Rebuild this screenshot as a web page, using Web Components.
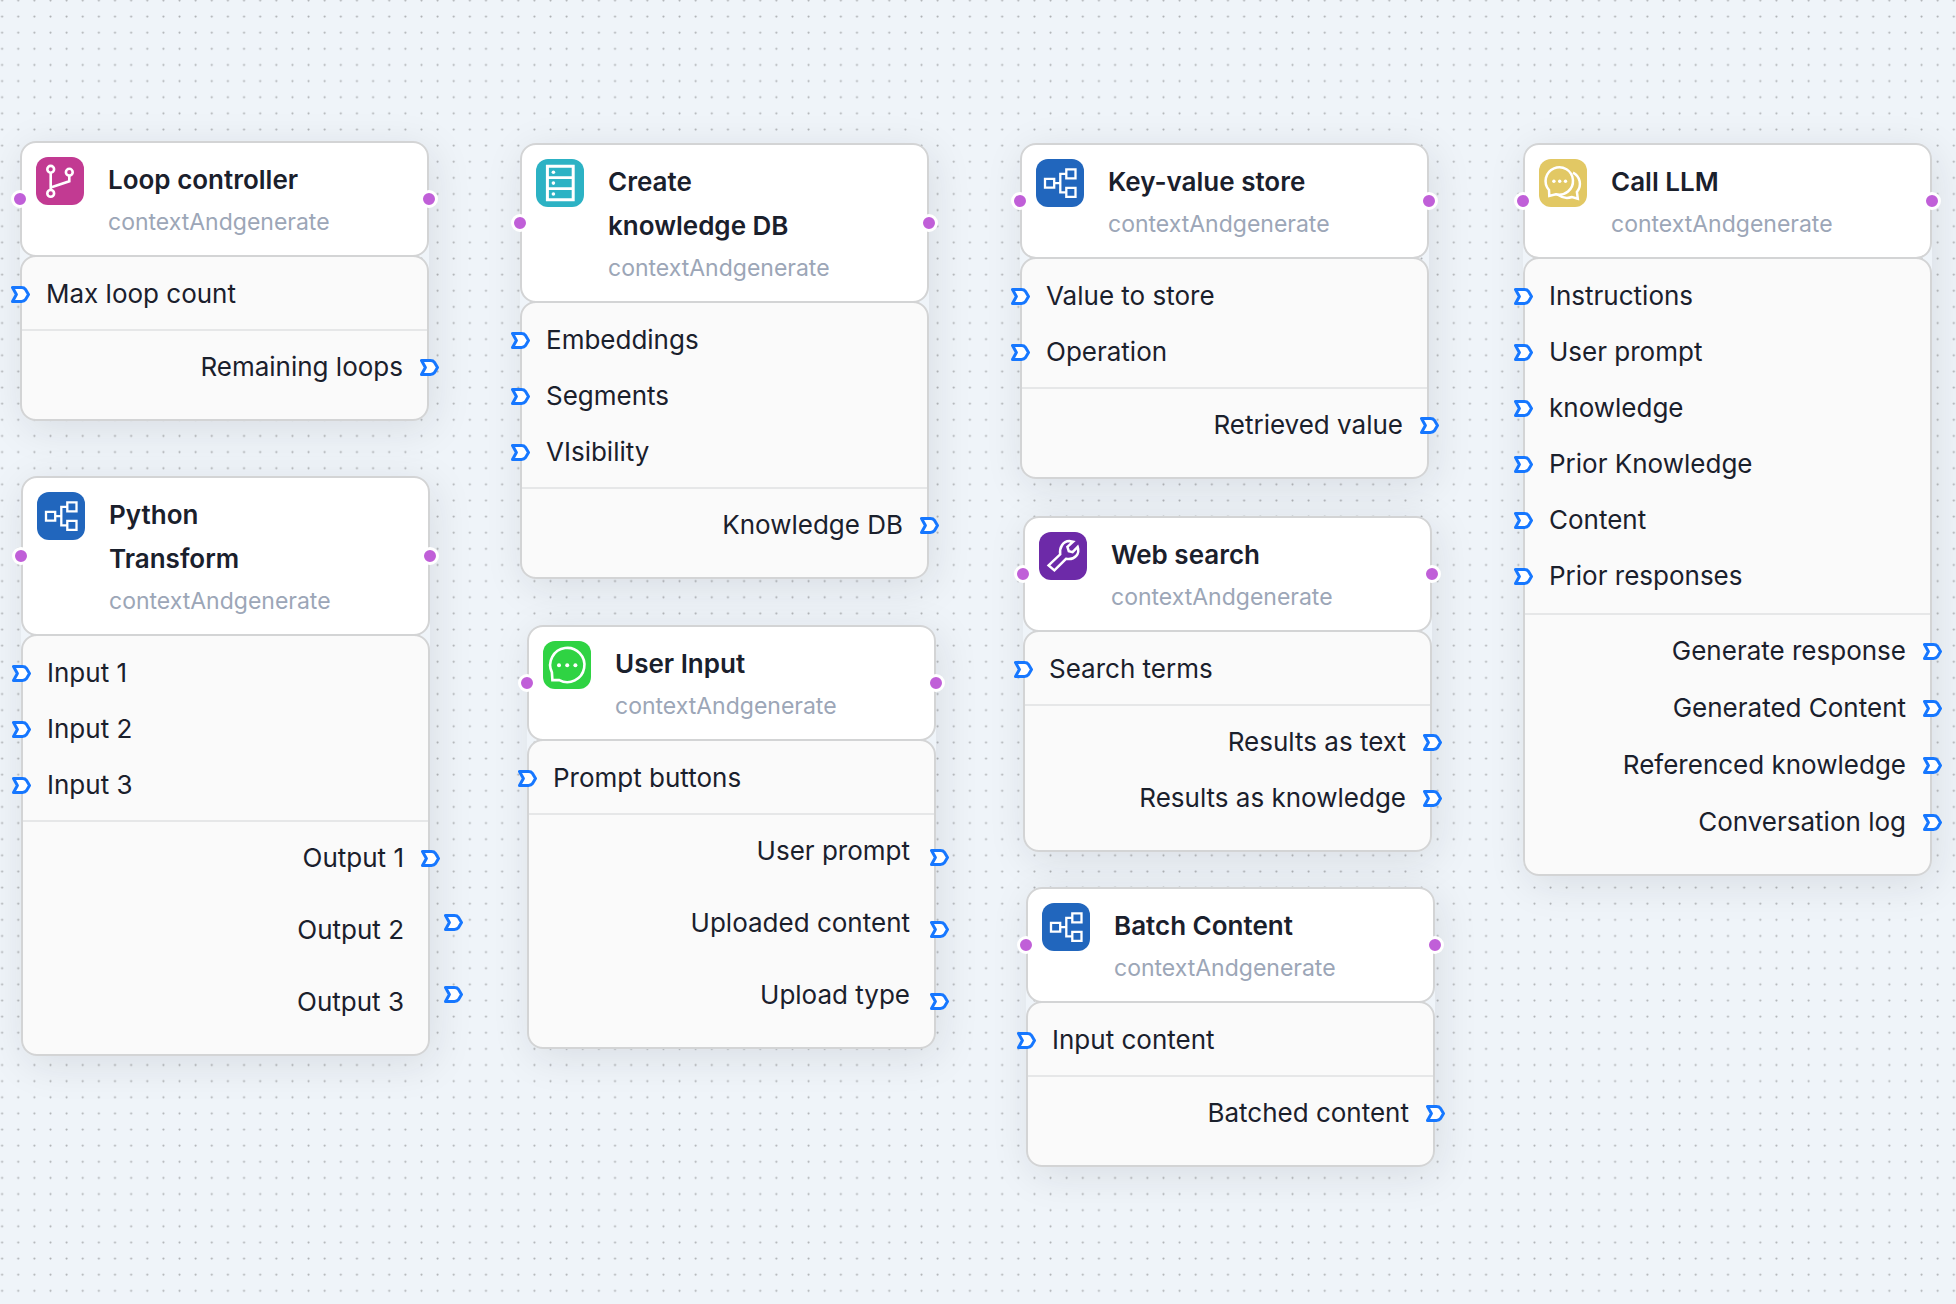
<!DOCTYPE html>
<html lang="en">
<head>
<meta charset="utf-8">
<meta name="viewport" content="width=device-width, initial-scale=1">
<title>Flow canvas</title>
<style>
  html, body { margin: 0; height: 100%; }
  body { font-family: Inter, "Liberation Sans", sans-serif; color: #1a202c; background: #eff4f9; }
</style>
</head>
<body>

<flow-canvas>
  <flow-node x="20" y="141" icon="branch" heading="Loop controller" subheading="contextAndgenerate">
    <flow-port slot="in">Max loop count</flow-port>
    <flow-port slot="out">Remaining loops</flow-port>
  </flow-node>
  <flow-node x="21" y="476" icon="split" heading="Python Transform" subheading="contextAndgenerate" spacing="loose">
    <flow-port slot="in">Input 1</flow-port>
    <flow-port slot="in">Input 2</flow-port>
    <flow-port slot="in">Input 3</flow-port>
    <flow-port slot="out">Output 1</flow-port>
    <flow-port slot="out" marker="detached">Output 2</flow-port>
    <flow-port slot="out" marker="detached">Output 3</flow-port>
  </flow-node>
  <flow-node x="520" y="143" icon="database" heading="Create knowledge DB" subheading="contextAndgenerate">
    <flow-port slot="in">Embeddings</flow-port>
    <flow-port slot="in">Segments</flow-port>
    <flow-port slot="in">VIsibility</flow-port>
    <flow-port slot="out">Knowledge DB</flow-port>
  </flow-node>
  <flow-node x="527" y="625" icon="chat" heading="User Input" subheading="contextAndgenerate" spacing="loose">
    <flow-port slot="in">Prompt buttons</flow-port>
    <flow-port slot="out" marker="low">User prompt</flow-port>
    <flow-port slot="out" marker="low">Uploaded content</flow-port>
    <flow-port slot="out" marker="low">Upload type</flow-port>
  </flow-node>
  <flow-node x="1020" y="143" icon="split" heading="Key-value store" subheading="contextAndgenerate">
    <flow-port slot="in">Value to store</flow-port>
    <flow-port slot="in">Operation</flow-port>
    <flow-port slot="out">Retrieved value</flow-port>
  </flow-node>
  <flow-node x="1023" y="516" icon="wrench" heading="Web search" subheading="contextAndgenerate">
    <flow-port slot="in">Search terms</flow-port>
    <flow-port slot="out">Results as text</flow-port>
    <flow-port slot="out">Results as knowledge</flow-port>
  </flow-node>
  <flow-node x="1026" y="887" icon="split" heading="Batch Content" subheading="contextAndgenerate">
    <flow-port slot="in">Input content</flow-port>
    <flow-port slot="out">Batched content</flow-port>
  </flow-node>
  <flow-node x="1523" y="143" icon="chats" heading="Call LLM" subheading="contextAndgenerate" spacing="roomy">
    <flow-port slot="in">Instructions</flow-port>
    <flow-port slot="in">User prompt</flow-port>
    <flow-port slot="in">knowledge</flow-port>
    <flow-port slot="in">Prior Knowledge</flow-port>
    <flow-port slot="in">Content</flow-port>
    <flow-port slot="in">Prior responses</flow-port>
    <flow-port slot="out">Generate response</flow-port>
    <flow-port slot="out">Generated Content</flow-port>
    <flow-port slot="out">Referenced knowledge</flow-port>
    <flow-port slot="out">Conversation log</flow-port>
  </flow-node>
</flow-canvas>

<script>
  class FlowCanvas extends HTMLElement {
    constructor() {
      super();
      this.attachShadow({ mode: 'open' }).innerHTML = `
        <style>
          :host { display: block; position: relative; min-height: 100vh; overflow: hidden; background: #eff4f9; }
          svg { position: absolute; inset: 0; width: 100%; height: 100%; }
        </style>
        <svg aria-hidden="true">
          <defs>
            <pattern id="grid" x="-6" y="-7.7" width="16.13" height="16.13" patternUnits="userSpaceOnUse">
              <circle cx="8.1" cy="8.1" r="1.05" fill="#adb0b3"/>
            </pattern>
          </defs>
          <rect width="100%" height="100%" fill="url(#grid)"/>
        </svg>
        <slot></slot>`;
    }
  }

  const ICONS = {
    branch: ['#c23a92', `
      <circle cx="14.7" cy="12.3" r="3.4"/><circle cx="33.3" cy="15.2" r="3.4"/><circle cx="14.7" cy="36.4" r="3.4"/>
      <path d="M14.7 15.7V33M33.3 18.6V24.2L14.7 30.4"/>`],
    split: ['#2166bd', `
      <g stroke-width="2.3"><path d="M9 19.8h9.2v8.8H9zM30.3 10.3h9.2v9h-9.2zM30.3 28.8h9.2v9h-9.2z"/>
      <path d="M18.2 24.2h6M30.3 14.8h-6v18.6h6"/></g>`],
    database: ['#2cb2c4', `
      <path stroke-width="3" d="M11.4 7.2h25.8v33.6H11.4z"/>
      <path stroke-width="2.6" d="M11.4 18.6h25.8M11.4 29.6h25.8"/>
      <g fill="#fff" stroke="none"><circle cx="17.4" cy="13.2" r="1.8"/><circle cx="17.4" cy="24.1" r="1.8"/><circle cx="17.4" cy="35" r="1.8"/></g>`],
    chat: ['#2fd343', `
      <path stroke-width="2.6" d="M8.9 31.4A17.1 17.1 0 1 1 16.3 39.1H9.4z"/>
      <g fill="#fff" stroke="none"><circle cx="16" cy="24.2" r="2"/><circle cx="24.2" cy="24.2" r="2"/><circle cx="32.4" cy="24.2" r="2"/></g>`],
    wrench: ['#6d2aa8', `
      <path stroke-width="2.5" d="M9.6 33.4L21.2 22.4C20.2 15.4 23.9 9.3 30.4 9.1L34 9.8 28.4 14.8 29.8 19.2 33.6 20.2 38.7 14.8C40.9 21.4 36.4 28.4 27 26.8L15.4 38.4z"/>`],
    chats: ['#e2c864', `
      <path stroke-width="2.5" d="M10 31A13.7 13.7 0 1 1 16.8 35.2L10.3 36.9z"/>
      <path stroke-width="2.5" d="M34 13.6A12.6 12.6 0 0 1 37.9 33L38.8 39.7 33 38A15 15 0 0 1 19.4 36"/>
      <g fill="#fff" stroke="none"><circle cx="14.9" cy="22.2" r="1.7"/><circle cx="20.7" cy="22.2" r="1.7"/><circle cx="26.5" cy="22.2" r="1.7"/></g>`]
  };

  class FlowIcon extends HTMLElement {
    constructor() {
      super();
      this.attachShadow({ mode: 'open' });
    }
    connectedCallback() {
      const [color, shapes] = ICONS[this.getAttribute('name')];
      this.shadowRoot.innerHTML = `
        <style>
          :host { display: block; flex: none; width: 48px; height: 48px; border-radius: 12px; background: ${color}; }
          svg { display: block; }
        </style>
        <svg width="48" height="48" viewBox="0 0 48 48" fill="none" stroke="#fff" stroke-width="2.6" aria-hidden="true">${shapes}</svg>`;
    }
  }

  class FlowPort extends HTMLElement {
    constructor() {
      super();
      this.attachShadow({ mode: 'open' }).innerHTML = `
        <style>
          :host { display: block; position: relative; padding: 0 24px; font-size: 26px; line-height: 40px; white-space: nowrap; }
          :host([slot="out"]) { text-align: right; }
          svg { position: absolute; top: 12px; left: -11px; }
          :host([slot="out"]) svg { left: auto; right: -12px; }
          :host([marker="low"]) svg { top: 18px; right: -15px; }
          :host([marker="detached"]) svg { top: 4px; right: -35px; }
        </style>
        <slot></slot>
        <svg width="19" height="17" viewBox="0 0 19 17" fill="#fff" stroke="#1677ff" stroke-width="3" stroke-linejoin="round" aria-hidden="true">
          <path d="M1.5 1.5H10.4Q13.2 1.5 14.4 3.3L17.5 8.5 14.4 13.7Q13.2 15.5 10.4 15.5H1.5L5.4 8.5z"/>
        </svg>`;
    }
  }

  class FlowNode extends HTMLElement {
    constructor() {
      super();
      this.attachShadow({ mode: 'open' });
    }
    connectedCallback() {
      this.style.left = this.getAttribute('x') + 'px';
      this.style.top = this.getAttribute('y') + 'px';
      this.shadowRoot.innerHTML = `
        <style>
          :host { display: block; position: absolute; width: 409px; border-radius: 16px; box-shadow: 4px 8px 40px rgba(30, 30, 36, .1); }
          * { box-sizing: border-box; }
          header, .body { border: 2px solid #d3d4d5; border-radius: 16px; }
          header { position: relative; display: flex; gap: 24px; padding: 14px 14px 13px; background: #fff; }
          .titles { padding-top: 1px; }
          h2 { max-width: 208px; margin: 0; font-size: 26px; font-weight: 600; line-height: 44px; }
          p { margin: 0; font-size: 23px; line-height: 40px; color: #9ca6b7; }
          i { position: absolute; top: calc(50% - 9px); width: 18px; height: 18px; border: 3px solid #fff; border-radius: 50%; background: #c05fd8; }
          i:first-of-type { left: -11px; }
          i:last-of-type { right: -11px; }
          .body { margin-top: -2px; background: #fafafa; }
          .ports { display: flex; flex-direction: column; gap: 16px; padding: 17px 0 15px; }
          .out { padding: 16px 0 32px; border-top: 2px solid #e6e7e8; }
          :host([spacing="loose"]) .out { gap: 32px; }
          :host([spacing="roomy"]) .in { padding-bottom: 17px; }
          :host([spacing="roomy"]) .out { gap: 17px; }
        </style>
        <header>
          <flow-icon name="${this.getAttribute('icon')}"></flow-icon>
          <div class="titles"><h2>${this.getAttribute('heading')}</h2><p>${this.getAttribute('subheading')}</p></div>
          <i></i><i></i>
        </header>
        <div class="body">
          <div class="ports in"><slot name="in"></slot></div>
          <div class="ports out"><slot name="out"></slot></div>
        </div>`;
    }
  }

  customElements.define('flow-canvas', FlowCanvas);
  customElements.define('flow-icon', FlowIcon);
  customElements.define('flow-port', FlowPort);
  customElements.define('flow-node', FlowNode);
</script>
</body>
</html>
